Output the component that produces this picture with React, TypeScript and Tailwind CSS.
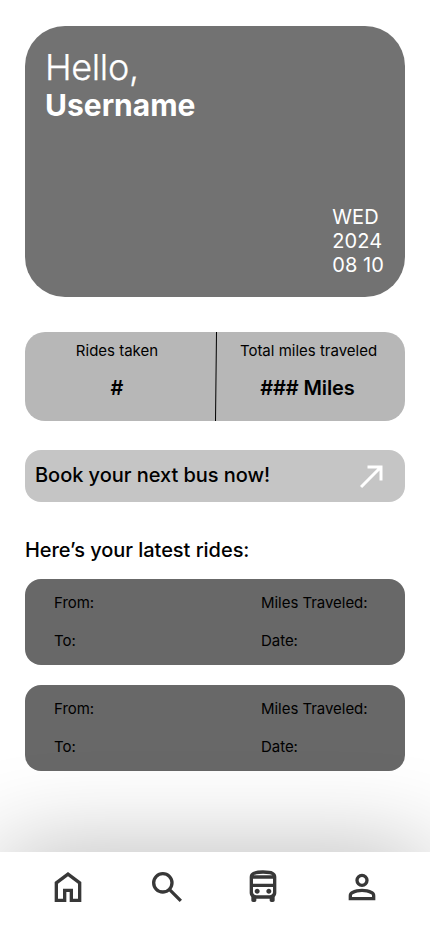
const icons = {
  home: 'M240-200h120v-240h240v240h120v-360L480-740 240-560v360Zm-80 80v-480l320-240 320 240v480H520v-240h-80v240H160Z',
  search:
    'M784-120 532-372q-30 24-69 38t-83 14q-109 0-184.5-75.5T120-580q0-109 75.5-184.5T380-840q109 0 184.5 75.5T640-580q0 44-14 83t-38 69l252 252-56 56ZM380-400q75 0 127.5-52.5T560-580q0-75-52.5-127.5T380-760q-75 0-127.5 52.5T200-580q0 75 52.5 127.5T380-400Z',
  bus: 'M240-120q-17 0-28.5-11.5T200-160v-82q-18-20-29-44.5T160-340v-380q0-83 77-121.5T480-880q172 0 246 37t74 123v380q0 29-11 53.5T760-242v82q0 17-11.5 28.5T720-120h-40q-17 0-28.5-11.5T640-160v-40H320v40q0 17-11.5 28.5T280-120h-40Zm0-440h480v-120H240v120Zm100 240q25 0 42.5-17.5T400-380q0-25-17.5-42.5T340-440q-25 0-42.5 17.5T280-380q0 25 17.5 42.5T340-320Zm280 0q25 0 42.5-17.5T680-380q0-25-17.5-42.5T620-440q-25 0-42.5 17.5T560-380q0 25 17.5 42.5T620-320ZM258-760h448q-15-17-64.5-28.5T482-800q-107 0-156.5 12.5T258-760Zm62 480h320q33 0 56.5-23.5T720-360v-120H240v120q0 33 23.5 56.5T320-280Z',
  person:
    'M480-480q-66 0-113-47t-47-113q0-66 47-113t113-47q66 0 113 47t47 113q0 66-47 113t-113 47ZM160-160v-112q0-34 17.5-62.5T224-378q62-31 126-46.5T480-440q66 0 130 15.5T736-378q29 15 46.5 43.5T800-272v112H160Zm80-80h480v-32q0-11-5.5-20T700-306q-54-27-109-40.5T480-360q-56 0-111 13.5T260-306q-9 5-14.5 14t-5.5 20v32Zm240-320q33 0 56.5-23.5T560-640q0-33-23.5-56.5T480-720q-33 0-56.5 23.5T400-640q0 33 23.5 56.5T480-560Z',
};

function NavIcon({ path, label }: { path: string; label: string }) {
  return (
    <button aria-label={label} className="size-10">
      <svg viewBox="0 -960 960 960" className="size-10 fill-[#383838]" fillRule="evenodd">
        <path d={path} />
      </svg>
    </button>
  );
}

function RideCard() {
  return (
    <div className="grid h-[86px] grid-cols-[207px_1fr] content-start gap-y-5 rounded-2xl bg-[#686868] pl-[29px] pt-[15px] text-[15px] leading-[18px] tracking-[-0.04px]">
      <span>From:</span>
      <span>Miles Traveled:</span>
      <span>To:</span>
      <span>Date:</span>
    </div>
  );
}

export default function App() {
  return (
    <div className="flex h-[932px] w-[430px] flex-col overflow-hidden bg-white font-['Inter',sans-serif] text-black">
      <main className="flex flex-1 flex-col px-[25px] pt-[26px]">
        <section className="flex h-[271px] flex-col justify-between rounded-[40px] bg-[#727272] pb-5 pl-5 pr-[21px] pt-5 text-white">
          <div>
            <p className="text-[36px] font-light leading-[43px] tracking-[-0.35px] [-webkit-text-stroke:0.25px_white]">Hello,</p>
            <p className="text-[30px] font-bold leading-[32px]">Username</p>
          </div>
          <div className="self-end text-xl leading-6 font-normal tracking-[0.06px]">
            <p>WED</p>
            <p>2024</p>
            <p>08 10</p>
          </div>
        </section>

        <section className="mt-[35px] flex h-[89px] rounded-[20px] bg-[#b7b7b7] text-center">
          <div className="w-[184px] pt-[10px]">
            <p className="text-[15px] leading-[18px]">Rides taken</p>
            <p className="mt-4 text-xl font-semibold leading-6">#</p>
          </div>
          <svg className="ml-[5px] h-[89px] w-1" viewBox="0 0 4 89">
            <path d="M2.5 0 1.5 89" stroke="#000" />
          </svg>
          <div className="ml-[4px] w-[173px] pt-[10px]">
            <p className="text-[15px] leading-[18px]">Total miles traveled</p>
            <p className="mr-[2px] mt-4 text-xl font-semibold leading-6 tracking-[-0.1px]">### Miles</p>
          </div>
        </section>

        <button className="mt-[29px] flex h-[52px] items-center justify-between rounded-2xl bg-[#c5c5c5] pl-[10px] pr-[15.5px] text-xl font-medium leading-6 tracking-[-0.04px]">
          <span className="pb-0.5">Book your next bus now!</span>
          <svg viewBox="0 0 24 24" className="mb-px size-9 fill-white">
            <path d="M9 5v2h6.59L4 18.59 5.41 20 17 8.41V15h2V5z" />
          </svg>
        </button>

        <h2 className="mt-9 text-xl font-medium leading-6 tracking-[-0.04px]">Here’s your latest rides:</h2>
        <div className="mt-[17px] flex flex-col gap-5">
          <RideCard />
          <RideCard />
        </div>
      </main>

      <nav className="flex h-20 bg-white pl-[48.3px] pt-[15px] shadow-[0_4px_100px_rgba(0,0,0,0.32)]">
        <div className="flex gap-[58.5px]">
          <NavIcon path={icons.home} label="Home" />
          <NavIcon path={icons.search} label="Search" />
        </div>
        <div className="ml-[56px] flex gap-[59px]">
          <NavIcon path={icons.bus} label="Rides" />
          <NavIcon path={icons.person} label="Profile" />
        </div>
      </nav>
    </div>
  );
}
